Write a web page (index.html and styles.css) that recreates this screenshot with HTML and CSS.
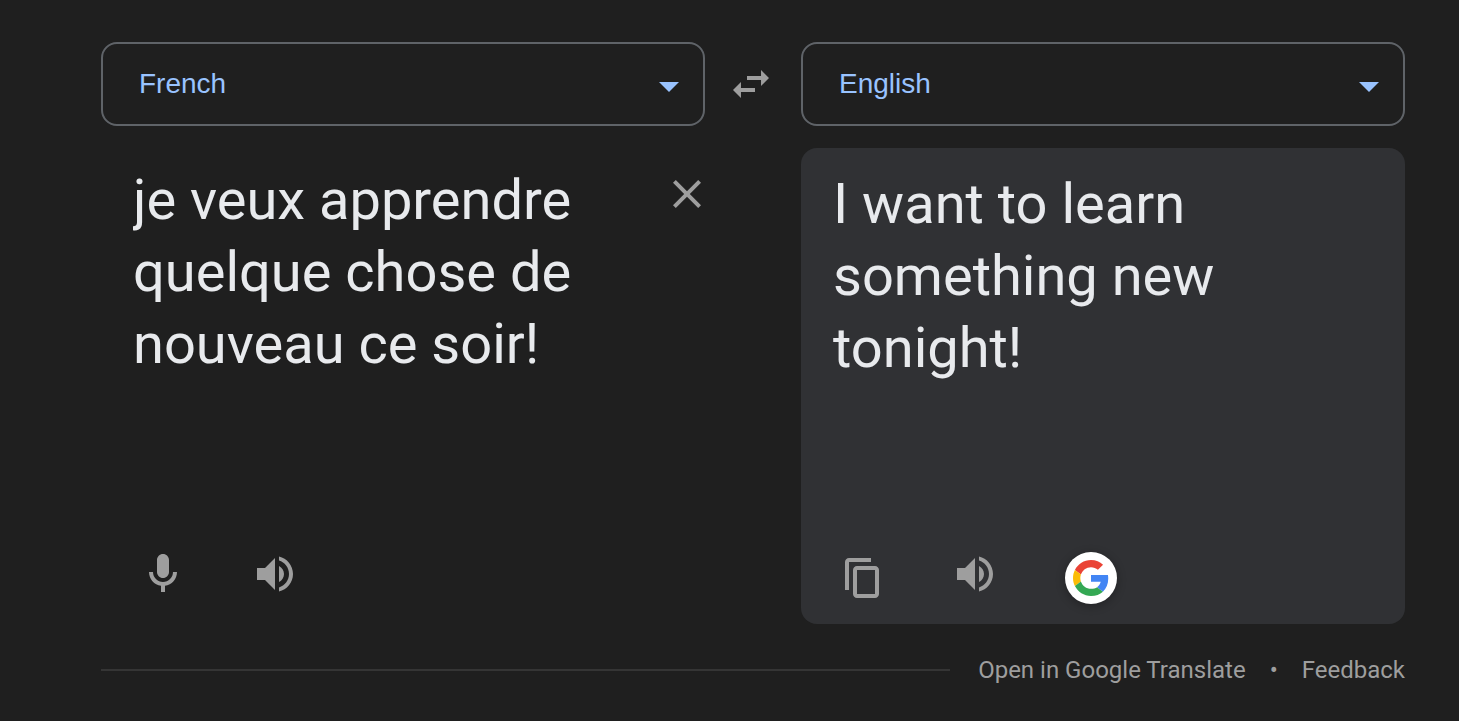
FILE: index.html
```html
<!DOCTYPE html>
<html lang="en">
<head>
<meta charset="utf-8">
<title>Translate</title>
<link rel="stylesheet" href="styles.css">
</head>
<body>
<main class="translator">
  <div class="languages">
    <button class="picker"><span>French</span><svg class="arrow" viewBox="0 0 20 10"><path d="M0 0h20L10 10z"/></svg></button>
    <svg class="icon swap" viewBox="0 0 24 24"><path d="M6.99 11L3 15l3.99 4v-3H14v-2H6.99v-3zM21 9l-3.99-4v3H10v2h7.01v3L21 9z"/></svg>
    <button class="picker"><span>English</span><svg class="arrow" viewBox="0 0 20 10"><path d="M0 0h20L10 10z"/></svg></button>
  </div>
  <div class="panes">
    <section class="pane source">
      <div class="row">
        <p class="text">je veux apprendre quelque chose de nouveau ce soir!</p>
        <svg class="icon close" viewBox="0 0 24 24"><path d="M19 6.41L17.59 5 12 10.59 6.41 5 5 6.41 10.59 12 5 17.59 6.41 19 12 13.41 17.59 19 19 17.59 13.41 12z"/></svg>
      </div>
      <div class="actions">
        <svg class="icon" viewBox="0 0 24 24"><path d="M12 14c1.66 0 3-1.34 3-3V5c0-1.66-1.34-3-3-3S9 3.34 9 5v6c0 1.66 1.34 3 3 3zm5-3c0 2.76-2.24 5-5 5s-5-2.24-5-5H5c0 3.53 2.61 6.43 6 6.92V21h2v-3.08c3.39-.49 6-3.39 6-6.92h-2z"/></svg>
        <svg class="icon" viewBox="0 0 24 24"><path d="M3 9v6h4l5 5V4L7 9H3zm13.5 3c0-1.77-1.02-3.29-2.5-4.03v8.05c1.48-.73 2.5-2.25 2.5-4.02zM14 3.23v2.06c2.89.86 5 3.54 5 6.71s-2.11 5.85-5 6.71v2.06c4.01-.91 7-4.49 7-8.77s-2.99-7.86-7-8.77z"/></svg>
      </div>
    </section>
    <section class="pane target">
      <p class="text">I want to learn something new tonight!</p>
      <div class="actions">
        <svg class="icon copy" viewBox="0 0 24 24"><path d="M15 2H4c-1.1 0-2 .9-2 2v14h2V4h11V2zm2 4H8c-1.1 0-2 .9-2 2v12c0 1.1.9 2 2 2h9c1.1 0 2-.9 2-2V8c0-1.1-.9-2-2-2zm0 14H8V8h9v12z"/></svg>
        <svg class="icon" viewBox="0 0 24 24"><path d="M3 9v6h4l5 5V4L7 9H3zm13.5 3c0-1.77-1.02-3.29-2.5-4.03v8.05c1.48-.73 2.5-2.25 2.5-4.02zM14 3.23v2.06c2.89.86 5 3.54 5 6.71s-2.11 5.85-5 6.71v2.06c4.01-.91 7-4.49 7-8.77s-2.99-7.86-7-8.77z"/></svg>
        <span class="google"><svg viewBox="0 0 48 48"><path fill="#ea4335" d="M24 9.5c3.54 0 6.71 1.22 9.21 3.6l6.85-6.85C35.9 2.38 30.47 0 24 0 14.62 0 6.51 5.38 2.56 13.22l7.98 6.19C12.43 13.72 17.74 9.5 24 9.5z"/><path fill="#4285f4" d="M46.98 24.55c0-1.57-.15-3.09-.38-4.55H24v9.02h12.94c-.58 2.96-2.26 5.48-4.78 7.18l7.73 6c4.51-4.18 7.09-10.36 7.09-17.65z"/><path fill="#fbbc05" d="M10.53 28.59c-.48-1.45-.76-2.99-.76-4.59s.27-3.14.76-4.59l-7.98-6.19C.92 16.46 0 20.12 0 24c0 3.88.92 7.54 2.56 10.78l7.97-6.19z"/><path fill="#34a853" d="M24 48c6.48 0 11.93-2.13 15.89-5.81l-7.73-6c-2.15 1.45-4.92 2.3-8.16 2.3-6.26 0-11.57-4.22-13.47-9.91l-7.98 6.19C6.51 42.62 14.62 48 24 48z"/></svg></span>
      </div>
    </section>
  </div>
  <footer class="footer">
    <span class="rule"></span>
    <a>Open in Google Translate</a>
    <span class="dot">•</span>
    <a>Feedback</a>
  </footer>
</main>
</body>
</html>
```
FILE: styles.css
```css
* { box-sizing: border-box; }
body {
  margin: 0;
  height: 721px;
  overflow: hidden;
  background: #1f1f1f;
  color: #9e9e9e;
  font-family: Roboto, "Liberation Sans", sans-serif;
}
.translator { padding: 42px 54px 0 101px; }
.languages { display: flex; align-items: center; }
.picker {
  display: flex;
  flex: 1;
  align-items: center;
  justify-content: space-between;
  height: 84px;
  padding: 0 24px 0 36px;
  border: 2px solid #5f6368;
  border-radius: 16px;
  background: none;
  color: #99c3ff;
  font: 28px "Liberation Sans", Arial, sans-serif;
}
.arrow { width: 20px; height: 10px; margin-top: 5px; fill: #99c3ff; }
.icon { flex: none; display: block; width: 48px; height: 48px; fill: #9e9e9e; }
.swap { margin: 0 26px 0 22px; }
.panes {
  display: grid;
  grid-template-columns: minmax(0, 1fr) minmax(0, 1fr);
  gap: 96px;
  margin-top: 22px;
}
.pane {
  display: flex;
  flex-direction: column;
  justify-content: space-between;
  height: 476px;
  padding: 20px 32px;
  border-radius: 16px;
}
.source { padding: 16px 0 26px 32px; }
.target { background: #303134; padding-bottom: 20px; }
.text {
  width: 480px;
  margin: 0;
  overflow: hidden;
  color: #e8eaed;
  font-size: 56px;
  line-height: 72px;
}
.row { display: flex; justify-content: space-between; }
.close { margin: 6px -6px 0 0; }
.actions { display: flex; gap: 64px; padding-left: 6px; }
.target .actions { padding-left: 8px; gap: 62px; }
.copy { margin-top: 4px; }
.google {
  display: grid;
  place-items: center;
  width: 52px;
  height: 52px;
  margin: 2px 0 0 4px;
  border-radius: 50%;
  background: #fff;
  box-shadow: 0 2px 10px rgba(0, 0, 0, .3);
}
.google svg { width: 36px; height: 36px; }
.footer {
  display: flex;
  align-items: center;
  margin-top: 32px;
  font-size: 24px;
  line-height: 28px;
}
.rule { flex: 1; height: 2px; margin-right: 28px; background: #353535; }
.dot { margin: 0 24px; }
```
